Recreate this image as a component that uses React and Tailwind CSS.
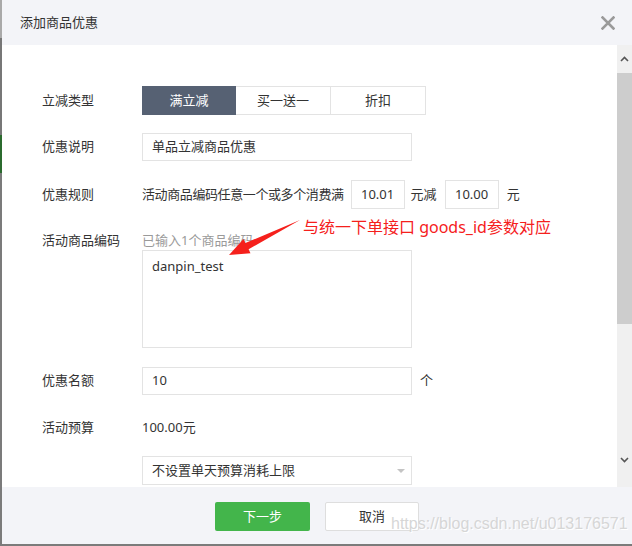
import React from 'react';

const font = { fontFamily: '"Noto Sans", "Noto Sans CJK SC", sans-serif' };

function Row({ label, children, className = '' }) {
  return (
    <div className={`flex items-center ${className}`}>
      <div className="w-[100px] shrink-0 text-[13px] text-[#333]">{label}</div>
      {children}
    </div>
  );
}

export default function App() {
  return (
    <div className="relative w-[632px] h-[546px] overflow-hidden bg-[#7b7b7b] flex" style={font}>
      {/* background page strip */}
      <div className="w-[2px] flex flex-col">
        <div className="h-[38px] bg-[#a9a9a9]" />
        <div className="h-[97px] bg-[#777]" />
        <div className="h-[38px] bg-[#2b6b2e]" />
        <div className="flex-1 bg-[#7b7b7b]" />
      </div>

      {/* Dialog */}
      <div className="flex-1 h-[544px] flex flex-col bg-white">
        {/* Header */}
        <div className="h-[45px] shrink-0 bg-[#f3f4f8] flex items-center justify-between pl-[18px] pr-[17px]">
          <span className="text-[13px] text-[#333]">添加商品优惠</span>
          <svg width="14" height="14" viewBox="0 0 14 14">
            <path d="M1.5 1.5L12.5 12.5M12.5 1.5L1.5 12.5" stroke="#9a9a9a" strokeWidth="2.6" strokeLinecap="square" />
          </svg>
        </div>

        {/* Body */}
        <div className="h-[442px] shrink-0 flex">
          <div className="flex-1 overflow-hidden pl-[40px] pt-[41px] text-[13px] text-[#333]">
            <Row label="立减类型">
              <div className="flex h-[29px]">
                <div className="w-[94px] bg-[#566173] text-white flex items-center justify-center">满立减</div>
                <div className="w-[95px] border border-l-0 border-[#e3e3e3] flex items-center justify-center">买一送一</div>
                <div className="w-[95px] border border-l-0 border-[#e3e3e3] flex items-center justify-center">折扣</div>
              </div>
            </Row>

            <Row label="优惠说明" className="mt-[18px]">
              <div className="w-[270px] h-[28px] border border-[#e3e3e3] flex items-center px-[9px]">单品立减商品优惠</div>
            </Row>

            <Row label="优惠规则" className="mt-[19px]">
              <span className="tracking-[-0.4px]">活动商品编码任意一个或多个消费满</span>
              <div className="ml-[7px] w-[54px] h-[29px] border border-[#e3e3e3] flex items-center justify-center">10.01</div>
              <span className="ml-[6px]">元减</span>
              <div className="ml-[8px] w-[54px] h-[29px] border border-[#e3e3e3] flex items-center justify-center">10.00</div>
              <span className="ml-[8px]">元</span>
            </Row>

            <div className="mt-[23px] flex">
              <div className="w-[100px] shrink-0 h-[16px] leading-[16px]">活动商品编码</div>
              <div>
                <div className="h-[16px] leading-[16px] text-[#9a9a9a]">已输入1个商品编码</div>
                <div className="mt-[2px] w-[270px] h-[98px] border border-[#e3e3e3] px-[9px] pt-[6px] leading-[18px]">danpin_test</div>
              </div>
            </div>

            <Row label="优惠名额" className="mt-[19px]">
              <div className="w-[270px] h-[28px] border border-[#e3e3e3] flex items-center px-[9px]">10</div>
              <span className="ml-[8px]">个</span>
            </Row>

            <Row label="活动预算" className="mt-[25px] h-[16px]">
              <span>100.00元</span>
            </Row>

            <Row label="" className="mt-[20px]">
              <div className="w-[270px] h-[29px] border border-[#e3e3e3] flex items-center justify-between pl-[9px] pr-[5px]">
                <span>不设置单天预算消耗上限</span>
                <svg width="10" height="6" viewBox="0 0 10 6"><path d="M1 1h8L5 5z" fill="#c4c4c4" /></svg>
              </div>
            </Row>
          </div>

          {/* Scrollbar */}
          <div className="w-[15px] shrink-0 bg-[#f0f0f0] flex flex-col items-center">
            <div className="h-[28px] flex items-center justify-center">
              <svg width="9" height="6" viewBox="0 0 9 6"><path d="M1 5L4.5 1.5L8 5" stroke="#555" strokeWidth="1.6" fill="none" /></svg>
            </div>
            <div className="w-full h-[251px] bg-[#cdcdcd]" />
            <div className="flex-1" />
            <div className="h-[44px] flex items-start justify-center pt-[14px]">
              <svg width="9" height="6" viewBox="0 0 9 6"><path d="M1 1L4.5 4.5L8 1" stroke="#555" strokeWidth="1.6" fill="none" /></svg>
            </div>
          </div>
        </div>

        {/* Footer */}
        <div className="flex-1 bg-[#f3f4f8] flex justify-center items-start pt-[15px] gap-[15px]">
          <div className="w-[95px] h-[29px] rounded-[2px] bg-[#43b54b] text-white text-[13px] flex items-center justify-center">下一步</div>
          <div className="w-[94px] h-[29px] rounded-[2px] bg-white border border-[#dedede] text-[#333] text-[13px] flex items-center justify-center">取消</div>
        </div>
      </div>

      {/* Annotation overlay */}
      <svg className="absolute left-0 top-0 pointer-events-none" width="632" height="546">
        <polygon points="229,255 243.5,238.9 245.4,243 300,220 248.6,249.2 250.5,253.3" fill="#f5201c" />
      </svg>
      <div className="absolute left-[303px] top-[216px] text-[16px] leading-[22px] text-[#f5201c] whitespace-nowrap">
        与统一下单接口 goods_id参数对应
      </div>
      <div
        className="absolute left-[391px] top-[514px] text-[16px] leading-[20px] text-[#d6d6d6] whitespace-nowrap"
        style={{ fontFamily: '"Liberation Sans", Arial, sans-serif', textShadow: '1px 1px 0 #fff' }}
      >
        https://blog.csdn.net/u013176571
      </div>
    </div>
  );
}
